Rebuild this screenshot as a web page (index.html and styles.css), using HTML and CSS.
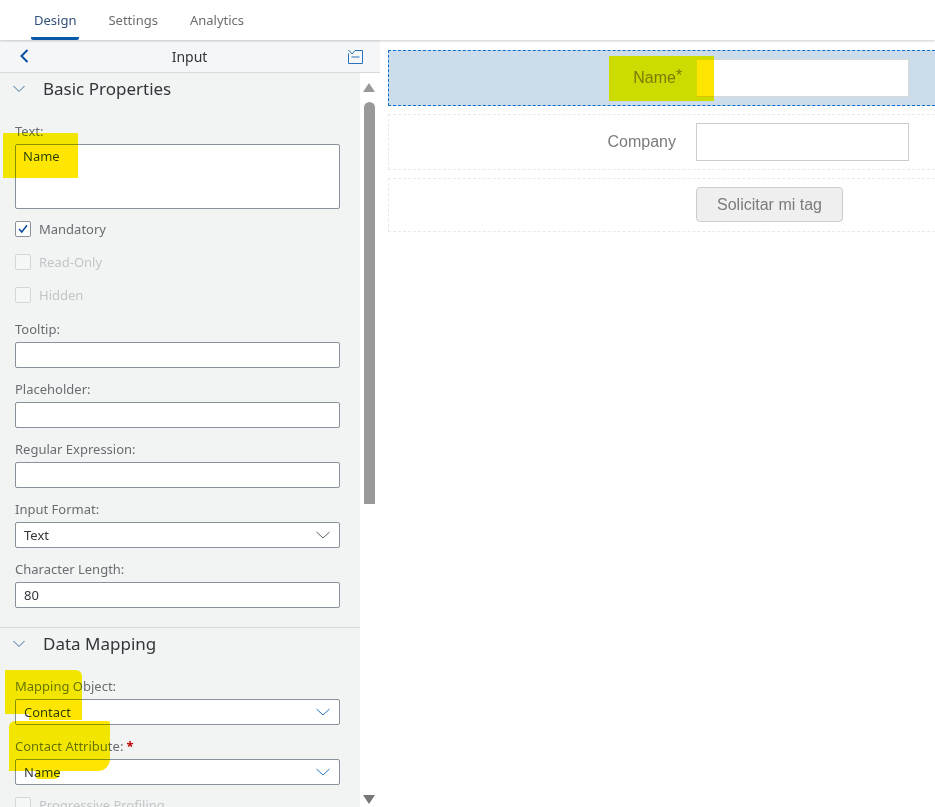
FILE: index.html
```html
<!DOCTYPE html>
<html lang="en">
<head>
<meta charset="utf-8">
<title>Input</title>
<link rel="stylesheet" href="styles.css">
</head>
<body>
<header class="tabs">
  <a class="tab active">Design</a>
  <a class="tab">Settings</a>
  <a class="tab">Analytics</a>
</header>
<main class="main">
  <aside class="panel">
    <div class="panel-head">
      <svg class="back" width="12" height="16" viewBox="0 0 12 16"><path d="M9.500 2 3.500 8l6 6" fill="none" stroke="#0a4f9e" stroke-width="2"/></svg>
      <span class="panel-title">Input</span>
      <svg class="collapse" width="16" height="16" viewBox="0 0 16 16"><path d="M1.500 5.500V15.500h14V2.500H8M1.500 2 5 6 8 2.500M4.500 9h8" fill="none" stroke="#2a73b8" stroke-width="1"/></svg>
    </div>
    <div class="panel-body">
      <div class="scroll">
        <section class="group">
          <h2 class="group-title"><svg class="chev" width="12" height="8" viewBox="0 0 12 8"><path d="M.5 1 6 6.500 11.500 1" fill="none" stroke="#3f6f9f"/></svg>Basic Properties</h2>
          <label class="lbl first">Text:</label>
          <div class="control area">Name</div>
          <div class="check on"><span class="box"><svg width="14" height="14" viewBox="0 0 14 14"><path d="M3 7 5.800 10 11 3.300" fill="none" stroke="#0a4f9e" stroke-width="1.600"/></svg></span>Mandatory</div>
          <div class="check off"><span class="box"></span>Read-Only</div>
          <div class="check off"><span class="box"></span>Hidden</div>
          <label class="lbl">Tooltip:</label>
          <div class="control"></div>
          <label class="lbl">Placeholder:</label>
          <div class="control"></div>
          <label class="lbl">Regular Expression:</label>
          <div class="control"></div>
          <label class="lbl">Input Format:</label>
          <div class="control select">Text<svg class="arrow" width="14" height="8" viewBox="0 0 14 8"><path d="M.5 1 7 7l6.500-6" fill="none" stroke="#55606b"/></svg></div>
          <label class="lbl">Character Length:</label>
          <div class="control">80</div>
        </section>
        <section class="group second">
          <h2 class="group-title"><svg class="chev" width="12" height="8" viewBox="0 0 12 8"><path d="M.5 1 6 6.500 11.500 1" fill="none" stroke="#3f6f9f"/></svg>Data Mapping</h2>
          <label class="lbl first">Mapping Object:</label>
          <div class="control select">Contact<svg class="arrow" width="14" height="8" viewBox="0 0 14 8"><path d="M.5 1 7 7l6.500-6" fill="none" stroke="#2a73b8"/></svg></div>
          <label class="lbl">Contact Attribute:<span class="req">*</span></label>
          <div class="control select">Name<svg class="arrow" width="14" height="8" viewBox="0 0 14 8"><path d="M.5 1 7 7l6.500-6" fill="none" stroke="#2a73b8"/></svg></div>
          <div class="check off last"><span class="box"></span>Progressive Profiling</div>
        </section>
      </div>
      <div class="scrollbar">
        <span class="tri up"></span>
        <span class="thumb"></span>
        <span class="tri down"></span>
      </div>
    </div>
  </aside>
  <section class="canvas">
    <div class="row selected">
      <span class="row-label">Name<span class="star">*</span></span>
      <span class="row-input"></span>
    </div>
    <div class="row">
      <span class="row-label">Company</span>
      <span class="row-input"></span>
    </div>
    <div class="row btn-row">
      <button class="row-btn">Solicitar mi tag</button>
    </div>
  </section>
</main>
<span class="mark m1"></span>
<span class="mark m2"></span>
<span class="mark m2b"></span>
<span class="mark m3"></span>
<span class="mark m4"></span>
<span class="mark m5"></span>
<span class="mark m6"></span>
</body>
</html>
```
FILE: styles.css
```css
* { box-sizing: border-box; }
html, body { margin: 0; height: 100%; overflow: hidden; background: #fff; }
body { font-family: "Noto Sans", sans-serif; width: 935px; height: 807px; position: relative; }

.tabs { height: 40px; display: flex; padding-left: 31px; gap: 14px; background: #fff; box-shadow: 0 1px 2px rgba(0,0,0,.2); position: relative; z-index: 2; }
.tab { height: 40px; padding: 11px 3px 0; font-size: 13px; line-height: 18px; color: #6a6d70; margin-right: 12px; }
.tab.active { color: #32507a; border-bottom: 3px solid #0a59a8; border-radius: 0 0 2px 2px; }

.main { display: flex; height: 767px; }
.panel { width: 380px; flex: none; display: flex; flex-direction: column; background: #fff; overflow: hidden; }
.panel-head { height: 33px; flex: none; display: flex; align-items: center; justify-content: space-between; background: #f5f6f7; border-bottom: 1px solid #d9d9d9; padding: 0 17px 0 18px; width: 380px; }
.panel-title { font-size: 14px; color: #32363a; margin-left: 2px; }
.back { flex: none; }
.collapse { flex: none; }
.panel-body { flex: 1; display: flex; min-height: 0; }
.scroll { width: 360px; flex: none; background: #f2f4f4; overflow: hidden; height: 734px; }
.group { padding: 0 20px 0 15px; }
.group.second { border-top: 1px solid #d9d9d9; margin-top: 19px; }
.group-title { margin: 0; font-size: 17px; font-weight: 400; color: #32363a; line-height: 24px; height: 24px; margin-top: 4px; display: flex; align-items: center; }
.second .group-title { margin-top: 4px; }
.chev { margin-right: 18px; flex: none; margin-left: -2px; }
.lbl { display: block; font-size: 13px; line-height: 18px; color: #6a6d70; height: 18px; margin-top: 12px; margin-bottom: 4px; }
.check + .lbl { margin-top: 8px; }
.lbl.first { margin-top: 21px; margin-bottom: 4px; height: 18px; }
.req { color: #bb0000; margin-left: 3px; font-weight: 700; }
.control { height: 26px; background: #fff; border: 1px solid #89919a; border-radius: 2px; font-size: 13px; line-height: 24px; color: #32363a; padding: 0 8px; position: relative; width: 325px; }
.area { height: 65px; line-height: 22px; padding-left: 7px; }
.select { padding-right: 30px; }
.arrow { position: absolute; right: 9px; top: 8px; }
.check { display: flex; align-items: center; height: 33px; padding-bottom: 2px; font-size: 13px; color: #6a6d70; }
.area + .check { margin-top: 4px; }
.box { width: 16px; height: 16px; flex: none; margin-right: 8px; background: #fff; border: 1px solid #89919a; border-radius: 2px; display: block; }
.box svg { display: block; }
.check.off { color: #c2c5c7; }
.check.off .box { border-color: #d4d6d8; background: #f5f6f6; }
.check.last { margin-top: 4px; }

.scrollbar { width: 20px; flex: none; background: #fff; position: relative; }
.thumb { position: absolute; left: 4px; top: 29px; width: 11px; height: 402px; background: #999; border-radius: 6px 6px 0 0; }
.tri { position: absolute; left: 3px; width: 0; height: 0; border-left: 6.500px solid transparent; border-right: 6.500px solid transparent; }
.tri.up { top: 10px; border-bottom: 9px solid #999; }
.tri.down { top: 722px; border-top: 9px solid #777; }

.canvas { flex: 1; padding: 10px 0 0 8px; min-width: 0; font-family: "Liberation Sans", sans-serif; }
.row { height: 56px; display: flex; align-items: center; border: 1px dashed #eaeaea; border-right: 0; margin-bottom: 8px; padding-left: 307px; }
.row.selected { background: #cddcea; border-color: #0a6ed1; }
.row-label { flex: none; font-size: 16px; color: #7b7b7b; white-space: nowrap; display: flex; justify-content: flex-end; width: 307px; margin-left: -307px; padding-right: 20px; }
.row-input { width: 213px; height: 38px; background: #fff; border: 1px solid #ccc; flex: none; }
.selected .row-input { border-color: #d8d8d8; }
.star { font-size: 16px; line-height: 16px; position: relative; top: -1px; width: 0; }
.btn-row { height: 54px; align-items: flex-start; padding-top: 8px; }
.row-btn { width: 147px; height: 35px; background: #efefef; border: 1px solid #ccc; border-radius: 4px; font: 16px "Liberation Sans", sans-serif; color: #7b7b7b; padding: 0; }

.mark { position: absolute; background: #ffe600; mix-blend-mode: darken; z-index: 5; }
.m1 { left: 3px; top: 133px; width: 75px; height: 45px; }
.m2 { left: 609px; top: 56px; width: 105px; height: 45px; background: #ffff00; mix-blend-mode: multiply; }
.m2b { left: 697px; top: 60px; width: 17px; height: 37px; background: #ffe6ff; mix-blend-mode: multiply; }
.m3 { left: 5px; top: 670px; width: 77px; height: 44px; border-radius: 0 6px 0 0; }
.m4 { left: 29px; top: 714px; width: 53px; height: 6px; }
.m5 { left: 9px; top: 721px; width: 101px; height: 50px; border-radius: 6px 2px 12px 0; }
.m6 { left: 36px; top: 771px; width: 24px; height: 8px; border-radius: 0 0 6px 2px; }
```
